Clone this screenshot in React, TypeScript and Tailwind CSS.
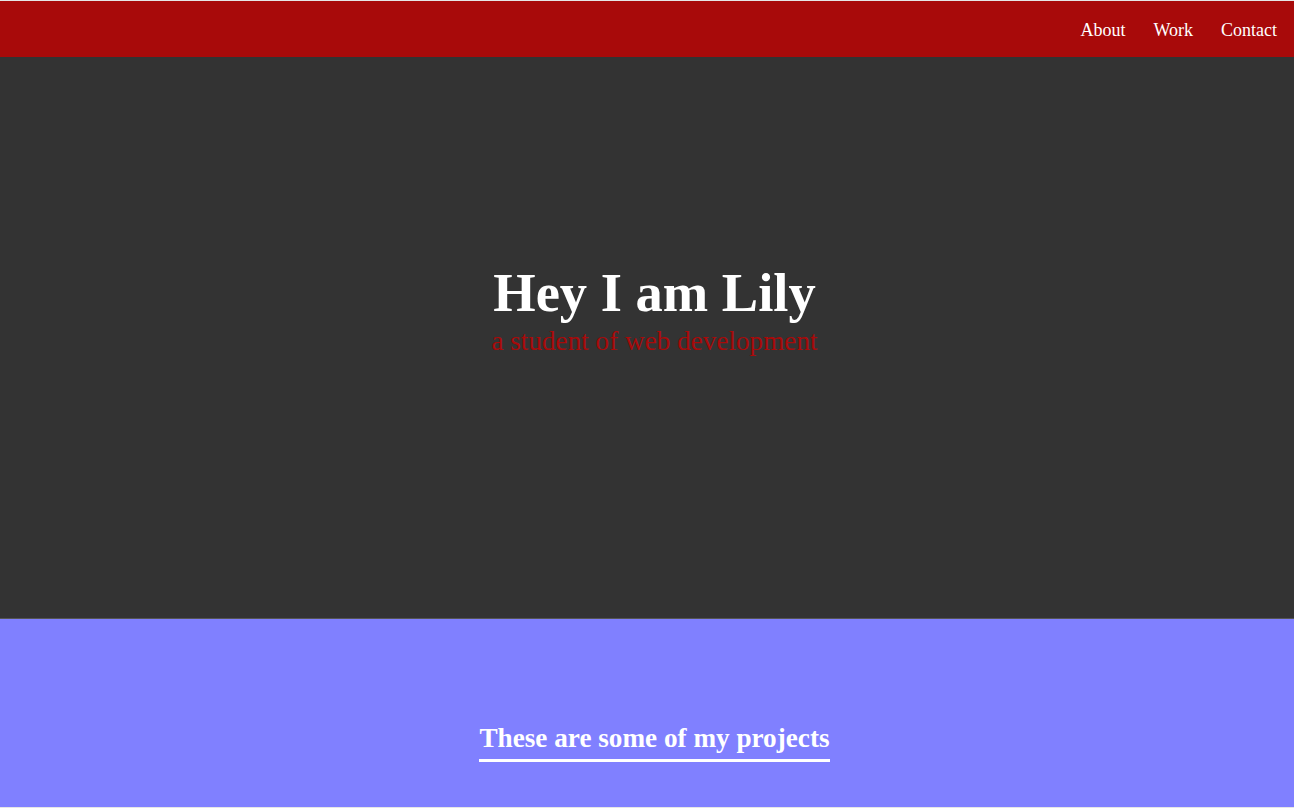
import React from "react";

const links = ["About", "Work", "Contact"];

const App: React.FC = () => {
  return (
    <div className="w-full h-[808px] overflow-hidden flex flex-col bg-[#8080ff] border-t border-b border-[#e6e6e6] font-['Liberation_Serif','Times_New_Roman',serif]">
      {/* top nav */}
      <nav className="h-[56px] shrink-0 bg-[#a80a0a] flex items-center justify-end gap-[28px] pr-[17px] pt-[2px]">
        {links.map((l) => (
          <a key={l} href="#" className="text-white text-[18px] leading-none">
            {l}
          </a>
        ))}
      </nav>

      {/* hero */}
      <section className="h-[561px] shrink-0 bg-[#333333] flex flex-col items-center pt-[209px] pl-[15px]">
        <h1 className="text-white text-[54.5px] leading-none font-bold">Hey I am Lily</h1>
        <p className="mt-[7px] text-[#a80a0a] text-[27.2px] leading-none">a student of web development</p>
      </section>

      {/* projects */}
      <section className="flex-1 border-t border-[#555555] bg-[#8080ff] pt-[106px] pl-[15px] flex justify-center items-start">
        <h2 className="inline-block text-white text-[27.2px] leading-none font-bold pb-[7px] border-b-[3px] border-white">
          These are some of my projects
        </h2>
      </section>
    </div>
  );
};

export default App;
